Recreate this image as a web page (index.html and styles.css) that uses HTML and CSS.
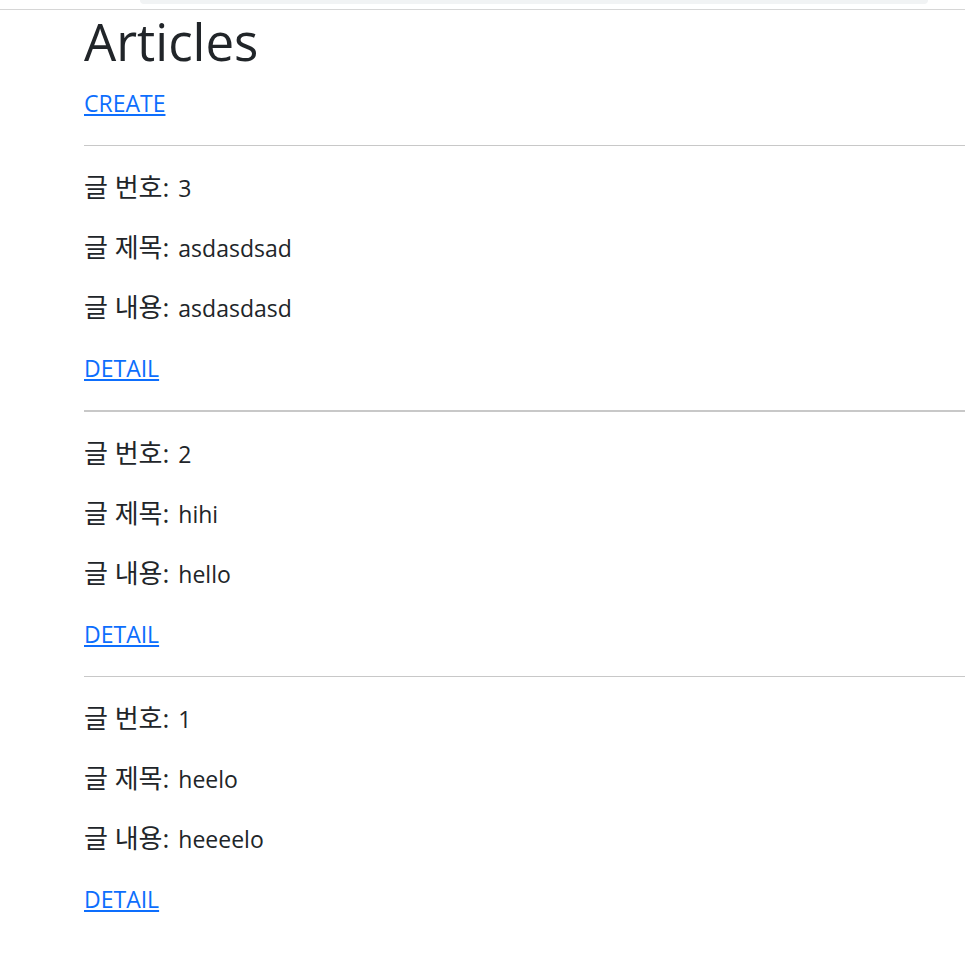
FILE: index.html
```html
<!DOCTYPE html>
<html lang="ko">
<head>
<meta charset="utf-8">
<title>Articles</title>
<link rel="stylesheet" href="styles.css">
</head>
<body>
<div class="topstrip">
  <div class="topbar"></div>
</div>
<main class="container">
  <h1 class="title">Articles</h1>
  <div class="line"><a href="#">CREATE</a></div>
  <hr class="rule">
  <section class="article">
    <p><span class="label">글 번호:</span> 3</p>
    <p><span class="label">글 제목:</span> asdasdsad</p>
    <p><span class="label">글 내용:</span> asdasdasd</p>
    <div class="line"><a href="#">DETAIL</a></div>
  </section>
  <hr class="rule thick">
  <section class="article">
    <p><span class="label">글 번호:</span> 2</p>
    <p><span class="label">글 제목:</span> hihi</p>
    <p><span class="label">글 내용:</span> hello</p>
    <div class="line"><a href="#">DETAIL</a></div>
  </section>
  <hr class="rule">
  <section class="article">
    <p><span class="label">글 번호:</span> 1</p>
    <p><span class="label">글 제목:</span> heelo</p>
    <p><span class="label">글 내용:</span> heeeelo</p>
    <div class="line"><a href="#">DETAIL</a></div>
  </section>
</main>
</body>
</html>
```

FILE: styles.css
```css
html, body {
  margin: 0;
  padding: 0;
  background: #fff;
}
body {
  font-family: "Open Sans", "Noto Sans CJK KR", sans-serif;
  font-size: 23px;
  line-height: 36px;
  color: #212529;
}
.topstrip {
  height: 9px;
  border-bottom: 1px solid #d6d6d6;
}
.topbar {
  margin-left: 140px;
  width: 788px;
  height: 4px;
  background: #f1f3f4;
  border-radius: 0 0 8px 8px;
}
.container {
  padding-left: 84px;
}
.title {
  margin: 0 0 12px 0;
  font-size: 51px;
  line-height: 63px;
  font-weight: 400;
}
a {
  color: #0d6efd;
  text-decoration: underline;
}
.line {
  height: 36px;
}
.rule {
  margin: 24px 0;
  border: 0;
  border-top: 1px solid #c8c8c8;
  height: 0;
}
.rule.thick {
  border-top-width: 2px;
}
.article p {
  margin: 0 0 24px 0;
  height: 36px;
}
.label {
  font-size: 26px;
  line-height: 1;
  margin-right: 3px;
}
```
